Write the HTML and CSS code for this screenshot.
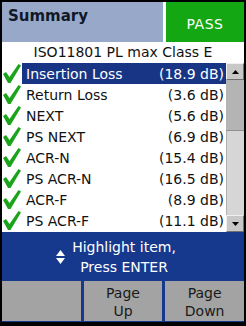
FILE: index.html
```html
<!DOCTYPE html>
<html lang="en">
<head>
  <meta charset="UTF-8">
  <title>Summary</title>
  <link rel="stylesheet" href="styles.css">
</head>
<body>
  <div class="screen">
    <div class="header">
      <div class="title-cell">Summary</div>
      <div class="pass-cell">PASS</div>
    </div>
    <div class="limit">ISO11801 PL max Class E</div>

    <div class="list-wrap">
      <div class="list">
        <div class="row selected">
          <svg class="check" viewBox="0 0 18 19"><polygon points="0,10 3,8 6.5,13 15.5,0 18,1.5 7.5,19 5,19"/></svg>
          <div class="cell"><span>Insertion Loss</span><span>(18.9 dB)</span></div>
        </div>
        <div class="row">
          <svg class="check" viewBox="0 0 18 19"><polygon points="0,10 3,8 6.5,13 15.5,0 18,1.5 7.5,19 5,19"/></svg>
          <div class="cell"><span>Return Loss</span><span>(3.6 dB)</span></div>
        </div>
        <div class="row">
          <svg class="check" viewBox="0 0 18 19"><polygon points="0,10 3,8 6.5,13 15.5,0 18,1.5 7.5,19 5,19"/></svg>
          <div class="cell"><span>NEXT</span><span>(5.6 dB)</span></div>
        </div>
        <div class="row">
          <svg class="check" viewBox="0 0 18 19"><polygon points="0,10 3,8 6.5,13 15.5,0 18,1.5 7.5,19 5,19"/></svg>
          <div class="cell"><span>PS NEXT</span><span>(6.9 dB)</span></div>
        </div>
        <div class="row">
          <svg class="check" viewBox="0 0 18 19"><polygon points="0,10 3,8 6.5,13 15.5,0 18,1.5 7.5,19 5,19"/></svg>
          <div class="cell"><span>ACR-N</span><span>(15.4 dB)</span></div>
        </div>
        <div class="row">
          <svg class="check" viewBox="0 0 18 19"><polygon points="0,10 3,8 6.5,13 15.5,0 18,1.5 7.5,19 5,19"/></svg>
          <div class="cell"><span>PS ACR-N</span><span>(16.5 dB)</span></div>
        </div>
        <div class="row">
          <svg class="check" viewBox="0 0 18 19"><polygon points="0,10 3,8 6.5,13 15.5,0 18,1.5 7.5,19 5,19"/></svg>
          <div class="cell"><span>ACR-F</span><span>(8.9 dB)</span></div>
        </div>
        <div class="row">
          <svg class="check" viewBox="0 0 18 19"><polygon points="0,10 3,8 6.5,13 15.5,0 18,1.5 7.5,19 5,19"/></svg>
          <div class="cell"><span>PS ACR-F</span><span>(11.1 dB)</span></div>
        </div>
      </div>

      <div class="scrollbar">
        <div class="sb-btn"><svg viewBox="0 0 7 4"><polygon points="3.5,0 7,4 0,4"/></svg></div>
        <div class="sb-thumb"></div>
        <div class="sb-track"></div>
        <div class="sb-btn"><svg viewBox="0 0 7 4"><polygon points="0,0 7,0 3.5,4"/></svg></div>
      </div>
    </div>

    <div class="hint">
      <svg class="updown" viewBox="0 0 9 14"><polygon points="4.5,0 9,6 0,6"/><polygon points="0,8 9,8 4.5,14"/></svg>
      <div class="hint-text">Highlight item,<br>Press ENTER</div>
    </div>

    <div class="softkeys">
      <div class="key"></div>
      <div class="key">Page<br>Up</div>
      <div class="key">Page<br>Down</div>
    </div>
  </div>
</body>
</html>
```

FILE: styles.css
```css
body {
  margin: 0;
  background: #000000;
  font-family: 'DejaVu Sans', sans-serif;
  font-size: 14px;
  color: #111111;
}
.screen {
  width: 242px;
  height: 320px;
  margin: 2px 2px 4px 2px;
  display: flex;
  flex-direction: column;
  background: #ffffff;
}
.header {
  height: 40px;
  display: flex;
  gap: 3px;
  background: #ffffff;
}
.title-cell {
  flex: 1;
  background: #98a8c8;
  color: #101828;
  font-weight: bold;
  font-size: 15px;
  line-height: 20px;
  padding: 4px 0 0 6px;
}
.pass-cell {
  width: 78px;
  background: #13a813;
  color: #ffffff;
  letter-spacing: 0.5px;
  display: flex;
  align-items: center;
  justify-content: center;
  padding-top: 3px;
  box-sizing: border-box;
}
.limit {
  height: 21px;
  line-height: 20px;
  text-align: center;
}
.list-wrap {
  height: 169px;
  display: flex;
}
.list {
  flex: 1;
}
.row {
  height: 21px;
  display: flex;
  position: relative;
}
.check {
  width: 18px;
  height: 19px;
  margin: 1px 1px 0 1px;
  fill: #1ba41b;
  flex-shrink: 0;
}
.cell {
  flex: 1;
  display: flex;
  justify-content: space-between;
  align-items: center;
  padding: 0 2px 0 4px;
}
.selected .cell {
  background: #183585;
  color: #ffffff;
}
.scrollbar {
  width: 18px;
  display: flex;
  flex-direction: column;
  background: #d6d6d6;
}
.sb-btn {
  height: 17px;
  box-sizing: border-box;
  background: #c8c8c8;
  border: 1px solid;
  border-color: #f0f0f0 #707070 #707070 #f0f0f0;
  display: flex;
  align-items: center;
  justify-content: center;
}
.sb-btn svg {
  width: 7px;
  height: 4px;
  fill: #000000;
}
.sb-thumb {
  height: 50px;
  background: #b4b4b4;
  border-bottom: 1px solid #909090;
}
.sb-track {
  flex: 1;
  border-left: 1px solid #b0b0b0;
}
.hint {
  height: 49px;
  background: #17398d;
  color: #ffffff;
  display: flex;
  align-items: center;
  justify-content: center;
  gap: 7px;
  padding-right: 14px;
}
.updown {
  width: 9px;
  height: 14px;
  fill: #ffffff;
}
.hint-text {
  text-align: center;
  line-height: 20px;
}
.softkeys {
  height: 41px;
  display: grid;
  grid-template-columns: 1fr 1fr 1fr;
  gap: 3px;
  background: #17398d;
  padding-bottom: 1px;
  box-sizing: border-box;
}
.key {
  background: #a3a3a3;
  color: #1a1a1a;
  text-align: center;
  line-height: 18px;
  padding-top: 3px;
}
```
